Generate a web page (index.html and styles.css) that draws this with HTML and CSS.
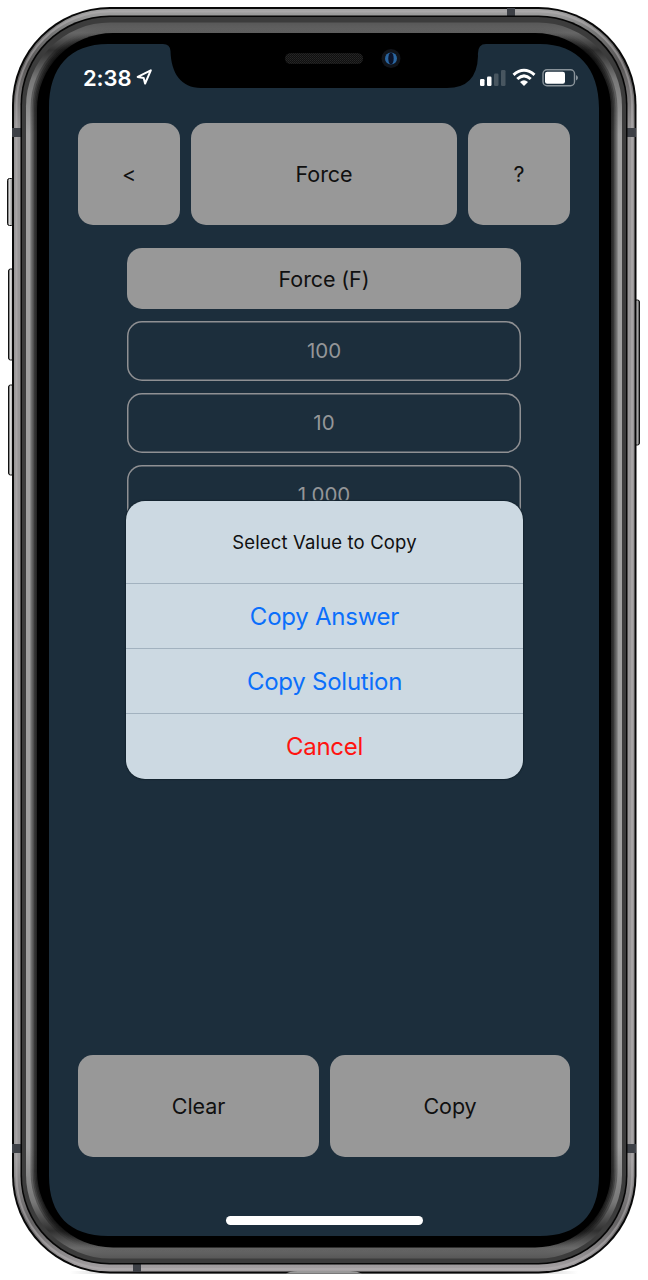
FILE: index.html
```html
<!DOCTYPE html>
<html lang="en">
<head>
<meta charset="utf-8">
<title>Force</title>
<link rel="stylesheet" href="styles.css">
</head>
<body>
<div class="stage">
  <svg class="device" width="648" height="1280" viewBox="0 0 648 1280" aria-hidden="true">
    <defs>
      <linearGradient id="key" x1="0" x2="1" y1="0" y2="0">
        <stop offset="0" stop-color="#222"/><stop offset=".3" stop-color="#ddd"/><stop offset=".65" stop-color="#aaa"/><stop offset="1" stop-color="#333"/>
      </linearGradient>
      <linearGradient id="rim" x1="0" x2="0" y1="7" y2="1273" gradientUnits="userSpaceOnUse">
        <stop offset="0" stop-color="#aaa"/><stop offset=".02" stop-color="#777"/><stop offset=".045" stop-color="#585656"/><stop offset=".1" stop-color="#989697"/><stop offset=".91" stop-color="#989697"/><stop offset=".96" stop-color="#656364"/><stop offset=".985" stop-color="#8e8b8d"/><stop offset="1" stop-color="#aaa6a8"/>
      </linearGradient>
      <linearGradient id="bevel" x1="0" x2="0" y1="23" y2="1258" gradientUnits="userSpaceOnUse">
        <stop offset="0" stop-color="#585858"/><stop offset=".008" stop-color="#666"/><stop offset=".022" stop-color="#303030"/><stop offset=".045" stop-color="#777"/><stop offset=".09" stop-color="#a0a0a0"/><stop offset=".91" stop-color="#a0a0a0"/><stop offset=".955" stop-color="#777"/><stop offset=".978" stop-color="#303030"/><stop offset=".992" stop-color="#6a6a6a"/><stop offset="1" stop-color="#585858"/>
      </linearGradient>
      <linearGradient id="shade" x1="0" x2="0" y1="23" y2="1258" gradientUnits="userSpaceOnUse">
        <stop offset="0" stop-opacity="0"/><stop offset=".01" stop-opacity=".03"/><stop offset=".03" stop-opacity=".3"/><stop offset=".97" stop-opacity=".3"/><stop offset=".99" stop-opacity=".03"/><stop offset="1" stop-opacity="0"/>
      </linearGradient>
      <linearGradient id="shadow" x1="0" x2="1" y1="0" y2="0">
        <stop offset="0" stop-color="#aaa" stop-opacity="0"/><stop offset=".15" stop-color="#aaa"/><stop offset=".85" stop-color="#aaa"/><stop offset="1" stop-color="#aaa" stop-opacity="0"/>
      </linearGradient>
      <pattern id="mesh" width="2" height="2" patternUnits="userSpaceOnUse"><rect width="2" height="2" fill="#101010"/><rect width="1" height="1" fill="#272727"/><rect x="1" y="1" width="1" height="1" fill="#202020"/></pattern>
    </defs>
    <rect x="70" y="1271" width="508" height="3" fill="url(#shadow)"/>
    <g fill="url(#key)" stroke="#111" stroke-width="1">
      <rect x="7.5" y="178.500" width="6" height="47" rx="2"/>
      <rect x="8.500" y="269" width="6" height="91" rx="2"/>
      <rect x="8.500" y="385" width="6" height="90" rx="2"/>
      <rect x="633.500" y="300" width="6" height="145" rx="2"/>
    </g>
    <rect x="12" y="7" width="624.500" height="1266.500" rx="98" fill="#080808"/>
    <rect x="14" y="9" width="620.500" height="1262.500" rx="96" fill="url(#rim)"/>
    <rect x="16.500" y="11.500" width="615.500" height="1257.500" rx="93" fill="none" stroke="#b5b2b4" stroke-width="2" opacity=".5"/>
    <g fill="#3d4046">
      <rect x="12" y="128" width="10" height="9"/><rect x="626" y="128" width="10" height="9"/>
      <rect x="12" y="1144" width="10" height="9"/><rect x="626" y="1144" width="10" height="9"/>
      <rect x="507" y="8" width="8" height="9"/><rect x="133" y="1263" width="8" height="9"/>
    </g>
    <rect x="20.500" y="15.500" width="607" height="1249" rx="89" fill="#060606"/>
    <rect x="22" y="17" width="604" height="1246" rx="88" fill="#3c3c3c"/>
    <rect x="26" y="22.500" width="596" height="1236" rx="84" fill="url(#bevel)"/>
    <g fill="url(#shade)">
      <rect x="30.500" y="27" width="587" height="1226" rx="81"/>
      <rect x="32.500" y="29" width="583" height="1222" rx="79"/>
      <rect x="34" y="30.500" width="580" height="1219" rx="78"/>
      <rect x="35.500" y="32" width="577" height="1216" rx="77"/>
    </g>
    <rect x="37" y="33" width="574" height="1214.500" rx="76" fill="#000"/>
    <path d="M286 1273.500Q290 1271 298 1271H350Q357 1271 362 1273.500Z" fill="#999"/>
    <path d="M108 44H163Q170 44 170.500 51C171 73 181 88 201 88H447Q477 88 478 56Q477 44 486 44H540C578 44 599 69 599 108V1176C599 1216 577 1236 540 1236H108C70 1236 49 1215 49 1176V108C49 67 70 44 108 44Z" fill="#1c2e3c"/>
    <rect x="285" y="53" width="78" height="11" rx="5.500" fill="url(#mesh)"/>
    <circle cx="391" cy="58.500" r="9.500" fill="#11141a"/><circle cx="391" cy="58.500" r="6" fill="#2a65a0"/><ellipse cx="391" cy="58.500" rx="2.700" ry="6" fill="#0b1329"/>
  </svg>

  <main class="screen">
    <header class="status">
      <div class="clock"><span>2:38</span>
        <svg width="17" height="17" viewBox="0 0 17 17"><path d="M1.700 8.900L14.800 2.300L9.100 15.500L7.700 9.900Z" fill="none" stroke="#fff" stroke-width="2" stroke-linejoin="round"/></svg>
      </div>
      <svg class="indicators" width="102" height="20" viewBox="0 0 102 20">
        <rect x="1" y="11" width="4.500" height="7" rx="1.200" fill="#fff"/><rect x="8" y="8.500" width="4.500" height="9.500" rx="1.200" fill="#fff"/><rect x="15" y="5.500" width="4.500" height="12.500" rx="1.200" fill="#485660"/><rect x="22" y="2" width="4.500" height="16" rx="1.200" fill="#485660"/>
        <g fill="none" stroke="#fff" stroke-width="3"><path d="M34.500 6.800Q45 -2.200 55.500 6.800"/><path d="M38.300 11Q45 4.800 51.700 11"/></g><path d="M41 14Q45 10.700 49 14L45 18Z" fill="#fff"/>
        <rect x="64" y="1.700" width="31.500" height="16" rx="4" fill="none" stroke="#89939a" stroke-width="1.400"/><rect x="66" y="3.700" width="20" height="12" rx="2.200" fill="#fff"/><path d="M97 7Q99 8 99 9.700T97 12.500Z" fill="#89939a"/>
      </svg>
    </header>
    <nav class="top">
      <div class="tile">&lt;</div><div class="tile">Force</div><div class="tile">?</div>
    </nav>
    <section class="values">
      <div class="tile name">Force (F)</div>
      <div class="field">100</div><div class="field">10</div><div class="field">1,000</div>
    </section>
    <section class="actions"><div class="tile">Clear</div><div class="tile">Copy</div></section>
    <div class="home"></div>
  </main>

  <div class="dialog">
    <div class="prompt">Select Value to Copy</div>
    <div class="option">Copy Answer</div>
    <div class="option">Copy Solution</div>
    <div class="option cancel">Cancel</div>
  </div>
</div>
</body>
</html>
```
FILE: styles.css
```css
* { box-sizing: border-box; }
body { margin: 0; background: #fff; font-family: Inter, "Liberation Sans", sans-serif; font-weight: 400; color: #101010; }
.stage { position: relative; width: 648px; height: 1280px; overflow: hidden; padding: 44px 49px; }
.device { position: absolute; inset: 0; }
svg { display: block; }
.screen { position: relative; display: flex; flex-direction: column; height: 1192px; padding: 0 29px; font-size: 21.5px; letter-spacing: -.1px; }
.status { display: flex; justify-content: space-between; height: 79px; padding: 24px 0 0 5px; margin-right: -11px; }
.clock { display: flex; align-items: flex-start; gap: 5px; height: 20px; color: #fff; font-size: 22px; line-height: 20px; font-weight: 600; }
.clock span { width: 48px; white-space: nowrap; }
.top { display: grid; grid-template-columns: 102px 266px 102px; column-gap: 11px; height: 102px; }
.tile { display: flex; align-items: center; justify-content: center; background: #989898; border-radius: 15px; }
.values { display: flex; flex-direction: column; gap: 12px; margin: 23px 49px 0; }
.name { height: 61px; }
.field { display: flex; align-items: center; justify-content: center; height: 60px; padding-bottom: 1px; box-shadow: inset 0 0 0 1.5px #8f9093; border-radius: 15px; color: #949698; font-size: 20.5px; letter-spacing: 0; }
.actions { display: grid; grid-template-columns: 241px 240px; gap: 11px; height: 102px; margin-top: auto; }
.home { width: 197px; height: 9px; margin: 59px auto 11px; border-radius: 5px; background: #fff; }
.dialog { position: absolute; left: 126px; top: 501px; width: 397px; height: 278px; display: grid; grid-template-rows: 82px 65px 65px 1fr; overflow: hidden; border-radius: 19px; background: #ccd9e2; box-shadow: 0 0 1px 1px #14242f; }
.prompt, .option { display: flex; align-items: center; justify-content: center; }
.prompt { font-size: 18.5px; letter-spacing: .15px; }
.option { border-top: 1px solid #a2b2bf; color: #0b6ffb; font-size: 24px; letter-spacing: -.25px; }
.cancel { color: #ff1410; }
```
